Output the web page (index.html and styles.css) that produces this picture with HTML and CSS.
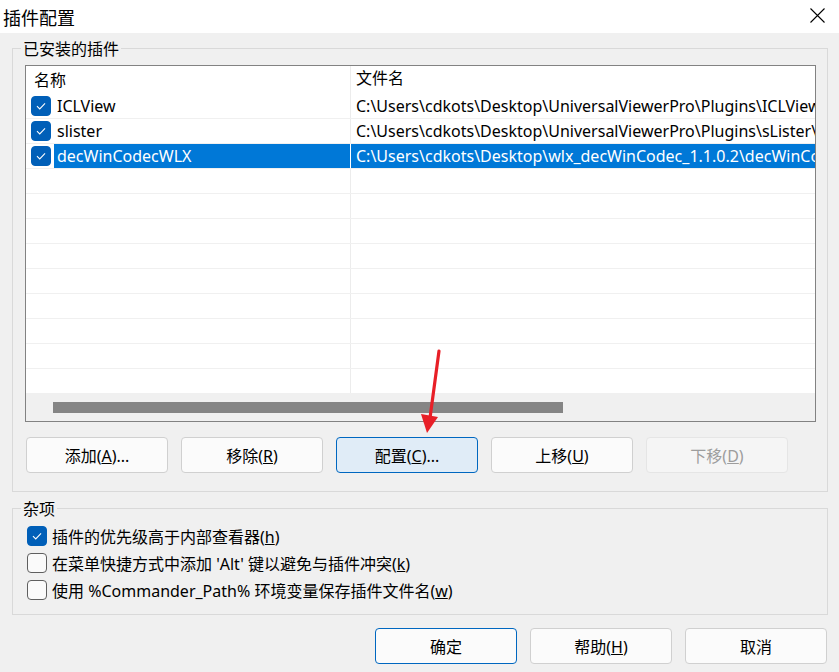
FILE: index.html
```html
<!DOCTYPE html>
<html lang="zh-CN">
<head>
    <meta charset="UTF-8">
    <title>插件配置</title>
    <link rel="stylesheet" href="styles.css">
</head>
<body>
    <div class="window">
        <div class="titlebar">
            <span class="title">插件配置</span>
            <svg class="close" viewBox="0 0 15 15"><path d="M0.5 0.5 L14.5 14.5 M14.5 0.5 L0.5 14.5" stroke="#000" stroke-width="1.1" fill="none"/></svg>
        </div>
        <div class="content">
            <div class="group-head"><span>已安装的插件</span></div>
            <div class="group-body installed">
                <div class="list">
                    <div class="list-head">
                        <div class="col name">名称</div>
                        <div class="col file">文件名</div>
                    </div>
                    <div class="row">
                        <div class="col name"><span class="check on"><svg viewBox="0 0 20 20"><path d="M5.5 10.2 L8.6 13.2 L14.5 7.2" /></svg></span><span class="label">ICLView</span></div>
                        <div class="col file">C:\Users\cdkots\Desktop\UniversalViewerPro\Plugins\ICLView\ICLView.wlx</div>
                    </div>
                    <div class="row">
                        <div class="col name"><span class="check on"><svg viewBox="0 0 20 20"><path d="M5.5 10.2 L8.6 13.2 L14.5 7.2" /></svg></span><span class="label">slister</span></div>
                        <div class="col file">C:\Users\cdkots\Desktop\UniversalViewerPro\Plugins\sLister\sLister.wlx</div>
                    </div>
                    <div class="row selected">
                        <div class="col name"><span class="check on"><svg viewBox="0 0 20 20"><path d="M5.5 10.2 L8.6 13.2 L14.5 7.2" /></svg></span><span class="label">decWinCodecWLX</span></div>
                        <div class="col file">C:\Users\cdkots\Desktop\wlx_decWinCodec_1.1.0.2\decWinCodec.wlx</div>
                    </div>
                    <div class="row"><div class="col name"></div><div class="col file"></div></div>
                    <div class="row"><div class="col name"></div><div class="col file"></div></div>
                    <div class="row"><div class="col name"></div><div class="col file"></div></div>
                    <div class="row"><div class="col name"></div><div class="col file"></div></div>
                    <div class="row"><div class="col name"></div><div class="col file"></div></div>
                    <div class="row"><div class="col name"></div><div class="col file"></div></div>
                    <div class="row"><div class="col name"></div><div class="col file"></div></div>
                    <div class="row"><div class="col name"></div><div class="col file"></div></div>
                    <div class="row"><div class="col name"></div><div class="col file"></div></div>
                    <div class="hscroll"><div class="thumb"></div></div>
                </div>
                <div class="btn-row">
                    <button class="btn">添加(<u>A</u>)...</button>
                    <button class="btn">移除(<u>R</u>)</button>
                    <button class="btn focused">配置(<u>C</u>)...</button>
                    <button class="btn">上移(<u>U</u>)</button>
                    <button class="btn" disabled>下移(<u>D</u>)</button>
                </div>
            </div>

            <div class="group-head misc-head"><span>杂项</span></div>
            <div class="group-body misc">
                <div class="option"><span class="check on"><svg viewBox="0 0 20 20"><path d="M5.5 10.2 L8.6 13.2 L14.5 7.2" /></svg></span><span>插件的优先级高于内部查看器(<u>h</u>)</span></div>
                <div class="option"><span class="check"></span><span>在菜单快捷方式中添加 'Alt' 键以避免与插件冲突(<u>k</u>)</span></div>
                <div class="option"><span class="check"></span><span>使用 %Commander_Path% 环境变量保存插件文件名(<u>w</u>)</span></div>
            </div>

            <div class="dialog-buttons">
                <button class="btn default">确定</button>
                <button class="btn">帮助(<u>H</u>)</button>
                <button class="btn">取消</button>
            </div>
        </div>

        <svg class="arrow" viewBox="0 0 839 672">
            <path d="M439 351 L430 418" stroke="#e81f27" stroke-width="3.2" stroke-linecap="round" fill="none"/>
            <polygon points="421,414 438,417 427,433" fill="#e81f27"/>
        </svg>
    </div>
</body>
</html>
```

FILE: styles.css
```css
* {
    box-sizing: border-box;
}
body {
    margin: 0;
    width: 839px;
    height: 672px;
    overflow: hidden;
    background: #f0f0f0;
    font-family: "Noto Sans", "Noto Sans CJK SC", sans-serif;
    font-size: 16px;
    color: #000;
}
.window {
    position: relative;
    height: 672px;
}
.titlebar {
    height: 33px;
    background: #fff;
    display: flex;
    align-items: center;
    justify-content: space-between;
    padding: 0 14px 0 3px;
}
.title {
    font-size: 18px;
}
.close {
    width: 15px;
    height: 15px;
    margin-top: -3px;
}
.content {
    padding: 6px 11px 0 12px;
}

/* group boxes */
.group-head {
    display: flex;
    height: 20px;
    line-height: 20px;
}
.group-head::before {
    content: "";
    width: 8px;
    height: 10px;
    align-self: flex-end;
    border-top: 1px solid #d9d9d9;
    border-left: 1px solid #d9d9d9;
}
.group-head::after {
    content: "";
    flex: 1;
    height: 10px;
    align-self: flex-end;
    border-top: 1px solid #d9d9d9;
    border-right: 1px solid #d9d9d9;
}
.group-head span {
    padding: 0 2px;
}
.group-body {
    border: 1px solid #d9d9d9;
    border-top: none;
}
.installed {
    padding: 6px 11px 18px 12px;
}
.misc-head {
    margin-top: 7px;
}
.misc {
    padding: 3px 12px 11px 14px;
}

/* list view */
.list {
    border: 1px solid #828282;
    background: #fff;
    overflow: hidden;
}
.list-head,
.row {
    display: flex;
}
.list-head {
    height: 28px;
    line-height: 28px;
}
.row {
    height: 25px;
    border-bottom: 1px solid #f0f0f0;
}
.col {
    white-space: nowrap;
    overflow: hidden;
}
.col.name {
    width: 325px;
    flex: none;
    border-right: 1px solid #ececec;
    display: flex;
    align-items: center;
}
.list-head .col.name {
    padding-left: 8px;
}
.list-head .col.file {
    padding-left: 5px;
}
.row .col.name {
    padding-left: 5px;
}
.col.file {
    flex: 1;
    min-width: 0;
    line-height: 24px;
    padding-left: 5px;
}
.label {
    flex: 1;
    align-self: stretch;
    line-height: 24px;
    padding-left: 3px;
}
.row.selected .label,
.row.selected .col.file {
    background: #0078d7;
    color: #fff;
}
.row.selected .col.name {
    border-right-color: #fff;
}
.row .check {
    margin-right: 3px;
}
.hscroll {
    height: 27px;
    background: #f0f0f0;
    padding: 8px 0 0 27px;
}
.thumb {
    width: 510px;
    height: 11px;
    background: #858585;
}

/* checkboxes */
.check {
    width: 20px;
    height: 20px;
    flex: none;
    border-radius: 4px;
    border: 1px solid #5f5f5f;
    background: #fafafa;
    display: inline-flex;
}
.check.on {
    background: #005fb8;
    border-color: #005fb8;
}
.check svg {
    width: 18px;
    height: 18px;
}
.check path {
    fill: none;
    stroke: #fff;
    stroke-width: 1.2;
}
.option {
    height: 27px;
    display: flex;
    align-items: center;
    gap: 5px;
    white-space: nowrap;
}

/* buttons */
.btn-row {
    display: flex;
    gap: 13px;
    margin: 15px 0 0 1px;
}
.btn {
    width: 142px;
    height: 36px;
    background: #fbfbfb;
    border: 1px solid #d0d0d0;
    border-radius: 4px;
    font-family: inherit;
    font-size: 16px;
    color: #000;
    padding: 0;
}
.btn.focused {
    background: #e0ecf7;
    border-color: #0067c0;
}
.btn.default {
    border-color: #0067c0;
}
.btn:disabled {
    background: #f5f5f5;
    border-color: #e5e5e5;
    color: #9d9d9d;
}
.dialog-buttons {
    display: flex;
    justify-content: flex-end;
    gap: 13px;
    margin-top: 13px;
    padding-right: 1px;
}

.arrow {
    position: absolute;
    left: 0;
    top: 0;
    width: 839px;
    height: 672px;
    pointer-events: none;
}
```
